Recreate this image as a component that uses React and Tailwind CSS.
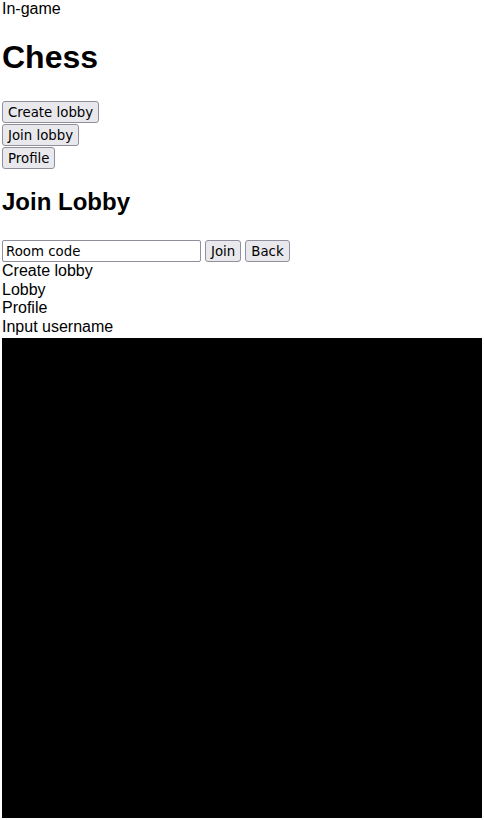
export default function App() {
  const btn =
    "bg-[#e9e9ed] border border-[#8f8f9d] rounded-[3px] px-[5px] h-[22px] text-[13.33px] leading-[15px] text-black font-['DejaVu_Sans',sans-serif]";
  return (
    <div className="px-[2px] bg-white text-black font-['Liberation_Sans',Arial,sans-serif] text-[16px] leading-[18.4px] min-h-[820px]">
      <div>In-game</div>
      <h1 className="text-[32px] font-bold leading-[37px] mt-[20.6px] mb-[25.4px]">Chess</h1>
      <div className="flex flex-col items-start gap-[1px]">
        <button className={btn}>Create lobby</button>
        <button className={btn}>Join lobby</button>
        <button className={btn}>Profile</button>
      </div>
      <h2 className="text-[24px] font-bold leading-[27.6px] mt-[19px] mb-[23px]">Join Lobby</h2>
      <div className="flex items-start gap-[4px] h-[23.5px]">
        <input
          className="mt-[1.5px] w-[199px] h-[22px] border border-[#8f8f9d] rounded-[2px] px-[3px] text-[13.33px] text-black font-['DejaVu_Sans',sans-serif] outline-none"
          defaultValue="Room code"
        />
        <button className={btn + " mt-[1.5px]"}>Join</button>
        <button className={btn + " mt-[1.5px]"}>Back</button>
      </div>
      <div>Create lobby</div>
      <div>Lobby</div>
      <div>Profile</div>
      <div>Input username</div>
      <div className="mt-[2px] w-[480px] h-[480px] bg-black" />
    </div>
  );
}
